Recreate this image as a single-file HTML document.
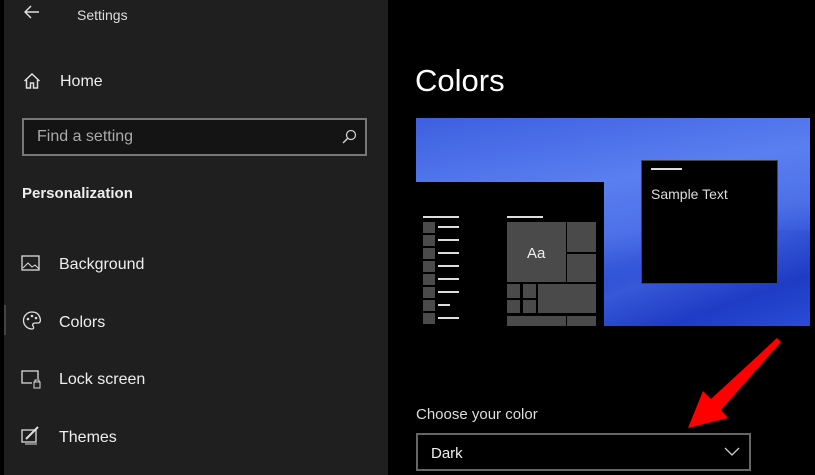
<!DOCTYPE html><html><head><style>
body{margin:0;width:815px;height:475px;background:#000;position:relative;overflow:hidden;font-family:"Liberation Sans",sans-serif;color:#fff}
.a{position:absolute}
.left{left:4px;top:0;width:384px;height:475px;background:#1f1f1f}
.t{font-size:16px;color:#eee}
.g{background:#4a4a4a}
.l{background:#ddd;height:2px}
</style></head><body>
<div class="a left"></div>
<svg class="a" style="left:24px;top:5px" width="16" height="14"><path d="M15 7H2M7 1L1 7l6 6" stroke="#ddd" stroke-width="1.5" fill="none"/></svg>
<div class="a" style="left:77px;top:7px;font-size:14px;color:#ddd">Settings</div>
<svg class="a" style="left:23px;top:72px" width="18" height="18"><path d="M1.5 9L9 2l7.5 7M3.5 7.5V16h4v-5h3v5h4V7.5" stroke="#ddd" stroke-width="1.5" fill="none"/></svg>
<div class="a t" style="left:60px;top:73px">Home</div>
<div class="a" style="left:22px;top:118px;width:341px;height:34px;border:2px solid #777;background:#141414"></div>
<div class="a" style="left:37px;top:128px;font-size:16px;color:#aaa">Find a setting</div>
<svg class="a" style="left:341px;top:129px" width="16" height="16"><circle cx="10" cy="6" r="4.5" stroke="#ccc" stroke-width="1.3" fill="none"/><path d="M7 9L2 14" stroke="#ccc" stroke-width="1.5"/></svg>
<div class="a" style="left:22px;top:185px;font-size:15px;font-weight:bold;color:#eee">Personalization</div>
<svg class="a" style="left:21px;top:255px" width="20" height="18"><rect x="1" y="1" width="17" height="14" stroke="#ddd" stroke-width="1.3" fill="none"/><path d="M2 13l5-5 4 4 3-2 4 4" stroke="#ddd" fill="none"/></svg>
<div class="a t" style="left:59px;top:256px">Background</div>
<div class="a" style="left:4px;top:305px;width:2px;height:30px;background:#444"></div>
<svg class="a" style="left:22px;top:311px" width="20" height="20"><path d="M10 1a8 8 0 1 0 0 17c2 0 2-2 1-3s0-3 2-3h3c2 0 3-2 2-5C17 3 14 1 10 1z" stroke="#ddd" stroke-width="1.3" fill="none"/><circle cx="6" cy="8" r="1.3" fill="#ddd"/><circle cx="10" cy="5" r="1.3" fill="#ddd"/><circle cx="14" cy="7" r="1.3" fill="#ddd"/></svg>
<div class="a t" style="left:59px;top:314px">Colors</div>
<svg class="a" style="left:21px;top:369px" width="20" height="20"><path d="M11 14H1V2h16v8" stroke="#ddd" stroke-width="1.3" fill="none"/><rect x="13" y="13" width="6" height="6" stroke="#ddd" fill="none"/><path d="M14 13v-2h4v2" stroke="#ddd" fill="none"/></svg>
<div class="a t" style="left:59px;top:371px">Lock screen</div>
<svg class="a" style="left:21px;top:426px" width="20" height="20"><rect x="1" y="4" width="14" height="12" stroke="#ddd" stroke-width="1.3" fill="none"/><path d="M5 13l12-12" stroke="#ddd" stroke-width="2"/><path d="M4 18h12" stroke="#ddd"/></svg>
<div class="a t" style="left:59px;top:429px">Themes</div>

<div class="a" style="left:415px;top:63px;font-size:31px;color:#fff">Colors</div>
<div class="a" style="left:416px;top:118px;width:394px;height:208px;background:linear-gradient(170deg,#3d5fe0 0%,#5a7ff0 35%,#4d70e8 55%,#2446d0 75%,#1a36b8 100%)"></div>
<div class="a" style="left:604px;top:230px;width:206px;height:96px;background:linear-gradient(160deg,transparent 20%,#3758d8 40%,#1e3cc4 70%,#2a4cd8)"></div>
<div class="a" style="left:416px;top:182px;width:188px;height:144px;background:#000"></div>
<div class="a l" style="left:423px;top:216px;width:36px"></div>
<div class="a" style="left:423px;top:222px">
<div class="a g" style="left:0;top:0;width:12px;height:11px"></div><div class="a l" style="left:15px;top:4px;width:21px"></div>
<div class="a g" style="left:0;top:13px;width:12px;height:11px"></div><div class="a l" style="left:15px;top:17px;width:21px"></div>
<div class="a g" style="left:0;top:26px;width:12px;height:11px"></div><div class="a l" style="left:15px;top:30px;width:21px"></div>
<div class="a g" style="left:0;top:39px;width:12px;height:11px"></div><div class="a l" style="left:15px;top:43px;width:21px"></div>
<div class="a g" style="left:0;top:52px;width:12px;height:11px"></div><div class="a l" style="left:15px;top:56px;width:21px"></div>
<div class="a g" style="left:0;top:65px;width:12px;height:11px"></div><div class="a l" style="left:15px;top:69px;width:21px"></div>
<div class="a g" style="left:0;top:78px;width:12px;height:11px"></div><div class="a l" style="left:15px;top:82px;width:12px"></div>
<div class="a g" style="left:0;top:91px;width:12px;height:11px"></div><div class="a l" style="left:15px;top:95px;width:21px"></div>
</div>
<div class="a l" style="left:507px;top:216px;width:36px"></div>
<div class="a g" style="left:507px;top:222px;width:59px;height:60px"></div>
<div class="a" style="left:527px;top:245px;font-size:15px;color:#eee">Aa</div>
<div class="a g" style="left:567px;top:222px;width:29px;height:30px"></div>
<div class="a g" style="left:567px;top:254px;width:29px;height:28px"></div>
<div class="a g" style="left:507px;top:284px;width:13px;height:14px"></div>
<div class="a g" style="left:523px;top:284px;width:13px;height:14px"></div>
<div class="a g" style="left:507px;top:300px;width:13px;height:13px"></div>
<div class="a g" style="left:523px;top:300px;width:13px;height:13px"></div>
<div class="a g" style="left:538px;top:284px;width:58px;height:29px"></div>
<div class="a g" style="left:507px;top:316px;width:59px;height:10px"></div>
<div class="a g" style="left:567px;top:316px;width:29px;height:10px"></div>
<div class="a" style="left:641px;top:160px;width:137px;height:124px;background:#000;border:1px solid #444;box-sizing:border-box"></div>
<div class="a l" style="left:651px;top:168px;width:31px"></div>
<div class="a" style="left:651px;top:186px;font-size:14px;color:#ddd">Sample Text</div>

<div class="a" style="left:416px;top:406px;font-size:15px;color:#ddd">Choose your color</div>
<div class="a" style="left:416px;top:433px;width:335px;height:38px;border:2px solid #666;box-sizing:border-box"></div>
<div class="a" style="left:431px;top:445px;font-size:15px;color:#eee">Dark</div>
<svg class="a" style="left:724px;top:447px" width="16" height="10"><path d="M1 1l7 7 7-7" stroke="#ccc" stroke-width="1.3" fill="none"/></svg>
<svg class="a" style="left:680px;top:335px" width="110" height="100"><polygon points="97,3 101,7 41,75 48,83 8,93 23,56 31,64" fill="#f00"/></svg>
</body></html>
